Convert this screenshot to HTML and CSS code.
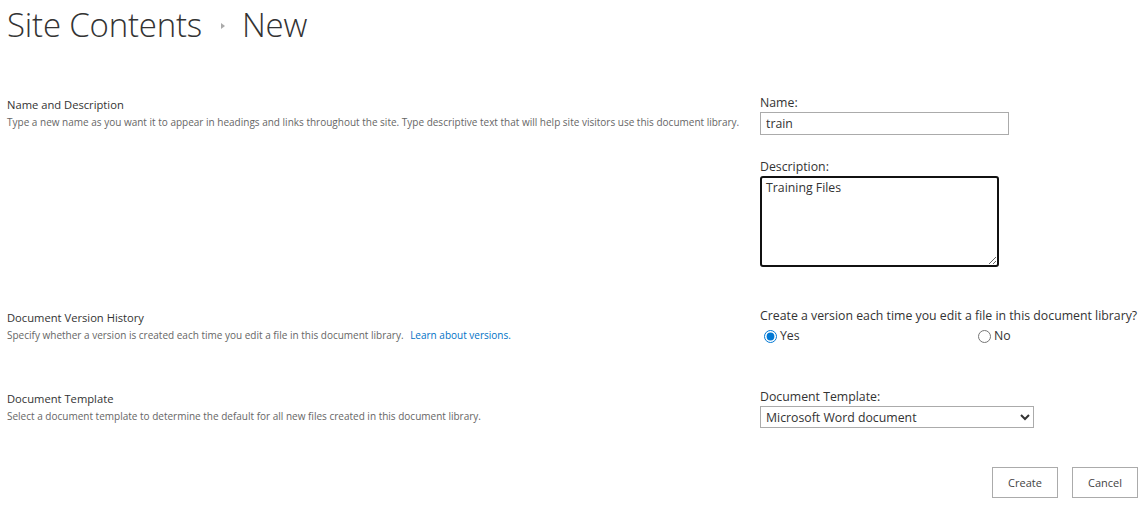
FILE: index.html
```html
<!DOCTYPE html>
<html lang="en">
<head>
    <meta charset="UTF-8">
    <title>Site Contents - New</title>
    <link rel="stylesheet" href="styles.css">
</head>
<body>
    <div class="page">
        <h1 class="title">
            <span>Site Contents</span>
            <span class="crumb-arrow"></span>
            <span>New</span>
        </h1>

        <div class="section first">
            <div class="info">
                <div class="info-title">Name and Description</div>
                <div class="info-desc">Type a new name as you want it to appear in headings and links throughout the site. Type descriptive text that will help site visitors use this document library.</div>
            </div>
            <div class="fields">
                <label class="field-label" for="name">Name:</label>
                <input type="text" id="name" class="text-input" value="train">
                <label class="field-label desc-label" for="desc">Description:</label>
                <textarea id="desc" class="text-area">Training Files</textarea>
            </div>
        </div>

        <div class="section version">
            <div class="info">
                <div class="info-title">Document Version History</div>
                <div class="info-desc">Specify whether a version is created each time you edit a file in this document library. <a href="#" class="link">Learn about versions.</a></div>
            </div>
            <div class="fields">
                <div class="field-label">Create a version each time you edit a file in this document library?</div>
                <div class="radios">
                    <label class="radio yes"><input type="radio" name="ver" checked>Yes</label>
                    <label class="radio"><input type="radio" name="ver">No</label>
                </div>
            </div>
        </div>

        <div class="section template">
            <div class="info">
                <div class="info-title">Document Template</div>
                <div class="info-desc">Select a document template to determine the default for all new files created in this document library.</div>
            </div>
            <div class="fields">
                <label class="field-label" for="tpl">Document Template:</label>
                <select id="tpl" class="select">
                    <option>Microsoft Word document</option>
                </select>
            </div>
        </div>

        <div class="buttons">
            <button class="btn">Create</button>
            <button class="btn">Cancel</button>
        </div>
    </div>
</body>
</html>
```

FILE: styles.css
```css
body {
    margin: 0;
    background-color: #fff;
    color: #333;
    font-family: "Open Sans", "Noto Sans", sans-serif;
}
.page {
    padding: 0 7px;
}
.title {
    margin: 0;
    height: 48px;
    font-size: 33px;
    font-weight: 300;
    color: #333;
    display: flex;
    align-items: center;
    gap: 14px;
    letter-spacing: -0.2px;
}
.crumb-arrow {
    width: 0;
    height: 0;
    border-top: 3px solid transparent;
    border-bottom: 3px solid transparent;
    border-left: 4px solid #aaa;
    margin: 4px 3px 0 5px;
}
.section {
    display: flex;
}
.section.first {
    margin-top: 46px;
}
.section.version {
    margin-top: 40px;
}
.section.template {
    margin-top: 43px;
}
.info {
    width: 753px;
}
.info-title {
    font-size: 11.2px;
    color: #333;
    line-height: 18px;
    padding-top: 2px;
}
.info-desc {
    font-size: 10px;
    color: #666;
    line-height: 16px;
    white-space: nowrap;
}
.link {
    color: #0072c6;
    text-decoration: none;
    margin-left: 4px;
}
.fields {
    display: flex;
    flex-direction: column;
    align-items: flex-start;
}
.field-label {
    font-size: 12.3px;
    color: #333;
    line-height: 18px;
}
.desc-label {
    margin-top: 23px;
}
.text-input {
    width: 249px;
    height: 23px;
    box-sizing: border-box;
    border: 1px solid #ababab;
    padding: 0 5px;
    font-family: inherit;
    font-size: 12.3px;
    color: #333;
    margin: 0;
}
.text-area {
    width: 239px;
    height: 91px;
    box-sizing: border-box;
    border: 2px solid #111;
    border-radius: 3px;
    padding: 1px 4px;
    font-family: inherit;
    font-size: 12.3px;
    color: #333;
    margin: 0;
}
.radios {
    display: flex;
    font-size: 12.3px;
    line-height: 18px;
    margin-top: 2px;
}
.radio {
    display: flex;
    align-items: center;
}
.radio.yes {
    width: 214px;
}
.radio input {
    margin: 0 3px 0 4px;
    width: 13px;
    height: 13px;
    accent-color: #0078d4;
}
.select {
    width: 274px;
    height: 22px;
    box-sizing: border-box;
    border: 1px solid #ababab;
    border-radius: 0;
    background: #fff;
    font-family: inherit;
    font-size: 12.3px;
    color: #333;
    padding: 0 1px;
    margin: 0;
}
.buttons {
    display: flex;
    justify-content: flex-end;
    gap: 14px;
    margin-top: 39px;
}
.btn {
    width: 66px;
    height: 31px;
    background: #fff;
    border: 1px solid #ababab;
    font-family: inherit;
    font-size: 11px;
    color: #444;
    cursor: pointer;
}
```
